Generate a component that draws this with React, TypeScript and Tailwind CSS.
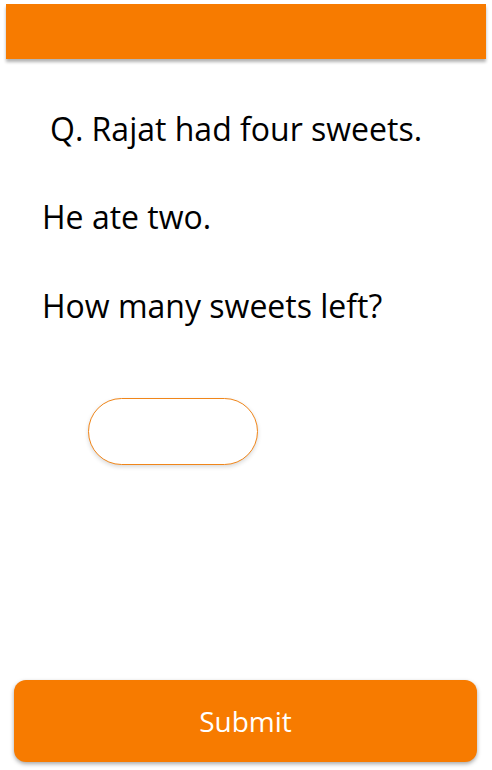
export default function App() {
  return (
    <div className="w-[492px] h-[770px] bg-white relative overflow-hidden" style={{ fontFamily: '"Open Sans", "Liberation Sans", sans-serif' }}>
      <div className="pt-[4px] px-[6px]">
        <div className="h-[55px] bg-[#f77b00] shadow-[0_3px_3px_rgba(0,0,0,0.3)]" />
      </div>
      <div className="pl-[42px] text-black text-[32px] leading-[40px]">
        <div className="mt-[50px] pl-[8px]">Q. Rajat had four sweets.</div>
        <div className="mt-[48px]">He ate two.</div>
        <div className="mt-[49px]">How many sweets left?</div>
      </div>
      <div className="mt-[72px] pl-[88px]">
        <div className="w-[170px] h-[67px] rounded-full border border-[#f0861a] shadow-[0_2px_4px_rgba(0,0,0,0.15)] bg-white" />
      </div>
      <div className="absolute left-[14px] top-[680px] w-[463px] h-[82px] rounded-[12px] bg-[#f77b00] shadow-[0_2px_4px_rgba(0,0,0,0.35)] flex items-center justify-center text-white text-[28px]">
        Submit
      </div>
    </div>
  );
}
